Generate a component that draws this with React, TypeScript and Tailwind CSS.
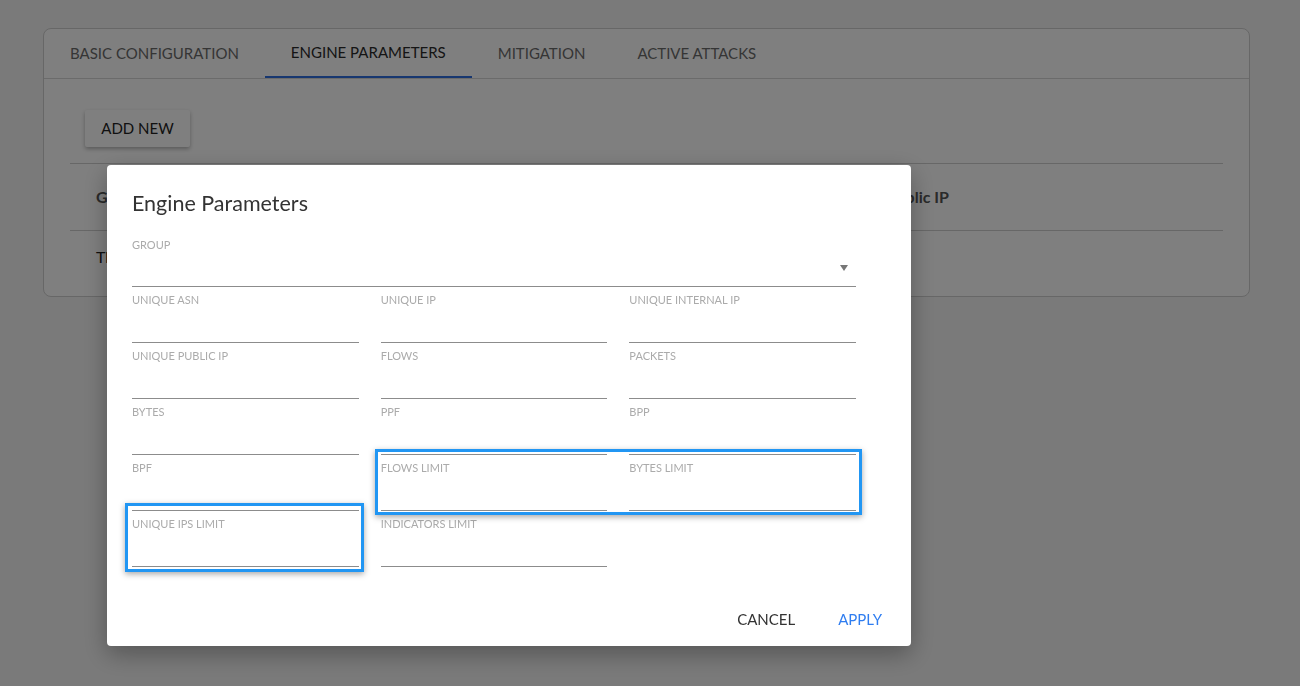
import { useState } from 'react'

const FIELDS = [
  'Unique ASN',
  'Unique IP',
  'Unique Internal IP',
  'Unique Public IP',
  'Flows',
  'Packets',
  'Bytes',
  'PPF',
  'BPP',
  'BPF',
  'Flows Limit',
  'Bytes Limit',
  'Unique IPs Limit',
  'Indicators Limit',
]

const TABS = ['Basic Configuration', 'Engine Parameters', 'Mitigation', 'Active Attacks']

function Field({ label }: { label: string }) {
  return (
    <div className="flex flex-col">
      <label className="mt-[7px] h-[12px] text-[11px] leading-[12px] uppercase text-[#ababab]">
        {label}
      </label>
      <input className="h-[37px] w-full border-b border-[#8c8c8c] bg-transparent outline-none" />
    </div>
  )
}

export default function App() {
  const [active] = useState(1)

  return (
    <div className="relative min-h-[686px] bg-[#f4f4f4] pt-[28px] px-[43px] font-['Lato','Liberation_Sans',sans-serif]">
      {/* Page behind the dialog */}
      <div className="w-[1207px] h-[269px] rounded-[8px] border border-[#cfcfcf] bg-white">
        <div className="flex h-[50px] border-b border-[#d6d6d6]">
          {TABS.map((t, i) => (
            <div
              key={t}
              className={`flex items-center px-[26px] text-[15px] uppercase ${
                i === active ? 'border-b-2 border-[#2f6fe0] text-[#2a2a2a]' : 'text-[#6b6b6b]'
              }`}
            >
              {t}
            </div>
          ))}
        </div>
        <div className="pt-[31px] pl-[41px]">
          <button className="h-[37px] w-[105px] rounded-[2px] bg-white text-[15px] uppercase text-[#222] shadow-[0_2px_4px_rgba(0,0,0,0.3)]">
            Add new
          </button>
        </div>
        <div className="mx-[26px] mt-[16px] border-t border-[#cfcfcf]">
          <div className="flex h-[67px] items-center border-b border-[#cfcfcf] px-[26px] text-[16px] font-bold text-[#555]">
            <span>Group</span>
            <span className="ml-auto mr-[248px]">Unique Public IP</span>
          </div>
          <div className="flex h-[52px] items-center px-[26px] text-[16px] text-[#222]">
            <span>Threshold default</span>
          </div>
        </div>
      </div>

      {/* Overlay + dialog */}
      <div className="fixed inset-0 bg-black/50 pl-[107px] pt-[165px]">
        <div className="relative w-[804px] rounded-[4px] bg-white pl-[25px] pr-[55px] pt-[24px] pb-[17px] shadow-[0_8px_24px_rgba(0,0,0,0.3)]">
          <h2 className="text-[21.5px] leading-7 text-[#333]">Engine Parameters</h2>

          <div className="mt-[22px] flex flex-col">
            <label className="h-[12px] text-[11px] leading-[12px] uppercase text-[#ababab]">Group</label>
            <div className="relative h-[36px] border-b border-[#8c8c8c]">
              <div className="absolute right-[8px] top-[14px] h-0 w-0 border-x-[4px] border-t-[6px] border-x-transparent border-t-[#777]" />
            </div>
          </div>

          <div className="grid w-[724px] grid-cols-3 gap-x-[22px]">
            {FIELDS.map(f => (
              <Field key={f} label={f} />
            ))}
          </div>

          <div className="mt-[42px] mr-[-26px] flex h-[20px] items-center justify-end gap-[43px] text-[15px]">
            <button className="uppercase text-[#333]">Cancel</button>
            <button className="uppercase text-[#2f7df0]">Apply</button>
          </div>

          {/* highlight boxes */}
          <div className="absolute left-[18px] top-[338px] h-[69px] w-[239px] border-[3px] border-[#2196f3] shadow-[0_2px_6px_rgba(0,0,0,0.35)]" />
          <div className="absolute left-[268px] top-[284px] h-[66px] w-[487px] border-[3px] border-[#2196f3] shadow-[0_2px_6px_rgba(0,0,0,0.35)]" />
        </div>
      </div>
    </div>
  )
}
